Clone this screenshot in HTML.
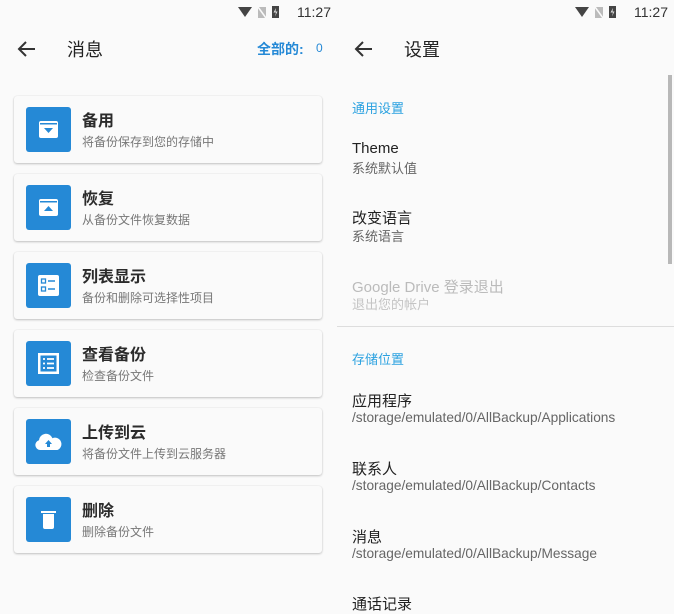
<!DOCTYPE html>
<html><head><meta charset="utf-8"><style>
*{margin:0;padding:0;box-sizing:border-box}
body{width:674px;height:600px;overflow:hidden;background:#fafafa;font-family:"Liberation Sans","Noto Sans CJK SC",sans-serif;position:relative}
.a{position:absolute;white-space:nowrap}
.card{position:absolute;left:14px;width:308px;height:67px;background:#fafafa;border-radius:3px;box-shadow:0 1px 2px rgba(0,0,0,.22),0 0 1px rgba(0,0,0,.12)}
.ic{position:absolute;left:12px;top:11px;width:45px;height:45px;background:#2589d6;border-radius:3px}
.ic svg{position:absolute;left:0;top:0}
.t{position:absolute;left:68px;top:11px;font-size:16px;font-weight:bold;color:#2b2b2b}
.s{position:absolute;left:68px;top:37px;font-size:12px;color:#777}
.h{font-size:18px;color:#222}
.pt{font-size:15px;color:#222}
.ps{font-size:13px;color:#666}
.pp{font-size:13.7px;color:#666}
.sec{font-size:13px;color:#2aa1e0}
</style></head><body>
<svg class="a" style="left:238px;top:4px" width="60" height="16"><path d="M0 3 L14 3 L7 13Z" fill="#444"/><path d="M20 3h8v11h-8z" fill="#bbb"/><path d="M20 3 L28 14" stroke="#fafafa" stroke-width="1.5"/><rect x="34" y="2" width="7" height="12" fill="#444"/><path d="M38 4 L35.5 8.5 H38 L37 12.5 L39.5 7.5 H37.5Z" fill="#ddd"/></svg>
<div class="a" style="left:297px;top:4px;font-size:14px;color:#333">11:27</div>
<svg class="a" style="left:575px;top:4px" width="60" height="16"><path d="M0 3 L14 3 L7 13Z" fill="#444"/><path d="M20 3h8v11h-8z" fill="#bbb"/><path d="M20 3 L28 14" stroke="#fafafa" stroke-width="1.5"/><rect x="34" y="2" width="7" height="12" fill="#444"/><path d="M38 4 L35.5 8.5 H38 L37 12.5 L39.5 7.5 H37.5Z" fill="#ddd"/></svg>
<div class="a" style="left:634px;top:4px;font-size:14px;color:#333">11:27</div>
<svg class="a" style="left:17px;top:40px" width="20" height="18"><path d="M18 9H3M9 2L2 9l7 7" stroke="#333" stroke-width="2" fill="none"/></svg>
<div class="a h" style="left:67px;top:36px">消息</div>
<div class="a" style="left:257px;top:39px;font-size:14px;font-weight:bold;color:#2589d6">全部的:</div>
<div class="a" style="left:316px;top:41px;font-size:12px;color:#2589d6">0</div>
<div class="card" style="top:96px"><div class="ic"><svg width="45" height="45"><rect x="13" y="14" width="19" height="17" rx="2" fill="#fff"/><rect x="14" y="16" width="17" height="1.5" fill="#2589d6"/><path d="M18 21h9l-4.5 5z" fill="#2589d6"/></svg></div><div class="t">备用</div><div class="s">将备份保存到您的存储中</div></div>
<div class="card" style="top:174px"><div class="ic"><svg width="45" height="45"><rect x="13" y="14" width="19" height="17" rx="2" fill="#fff"/><rect x="14" y="16" width="17" height="1.5" fill="#2589d6"/><path d="M18 26h9l-4.5-5z" fill="#2589d6"/></svg></div><div class="t">恢复</div><div class="s">从备份文件恢复数据</div></div>
<div class="card" style="top:252px"><div class="ic"><svg width="45" height="45"><rect x="12" y="12" width="21" height="21" rx="2" fill="#fff"/><rect x="15.5" y="16" width="4" height="4" fill="none" stroke="#2589d6" stroke-width="1.3"/><rect x="15.5" y="24" width="4" height="4" fill="none" stroke="#2589d6" stroke-width="1.3"/><path d="M22 18h7M22 26h7" stroke="#2589d6" stroke-width="1.5"/></svg></div><div class="t">列表显示</div><div class="s">备份和删除可选择性项目</div></div>
<div class="card" style="top:330px"><div class="ic"><svg width="45" height="45"><rect x="12" y="12" width="21" height="21" fill="#fff"/><rect x="14.5" y="14.5" width="16" height="16" fill="#2589d6"/><path d="M17 18h2M17 22.5h2M17 27h2M21 18h7M21 22.5h7M21 27h7" stroke="#fff" stroke-width="1.8"/></svg></div><div class="t">查看备份</div><div class="s">检查备份文件</div></div>
<div class="card" style="top:408px"><div class="ic"><svg width="45" height="45"><path d="M14 31a5 5 0 0 1 -1-9.8a7 7 0 0 1 13.5-2a5.5 5.5 0 0 1 5 11.8z" fill="#fff"/><path d="M19 25h7l-3.5-4z M21 25h3v3h-3z" fill="#2589d6"/></svg></div><div class="t">上传到云</div><div class="s">将备份文件上传到云服务器</div></div>
<div class="card" style="top:486px"><div class="ic"><svg width="45" height="45"><path d="M15 14h15v2h-15z M17 17h11v13a2 2 0 0 1-2 2h-7a2 2 0 0 1-2-2z" fill="#fff"/></svg></div><div class="t">删除</div><div class="s">删除备份文件</div></div>
<svg class="a" style="left:354px;top:40px" width="20" height="18"><path d="M18 9H3M9 2L2 9l7 7" stroke="#333" stroke-width="2" fill="none"/></svg>
<div class="a h" style="left:404px;top:36px">设置</div>
<div class="a" style="left:668px;top:75px;width:4px;height:189px;background:#b8b8b8"></div>
<div class="a sec" style="left:352px;top:98px">通用设置</div>
<div class="a pt" style="left:352px;top:140px">Theme</div>
<div class="a ps" style="left:352px;top:158px">系统默认值</div>
<div class="a pt" style="left:352px;top:207px">改变语言</div>
<div class="a ps" style="left:352px;top:226px">系统语言</div>
<div class="a pt" style="left:352px;top:276px;color:#bbb">Google Drive 登录退出</div>
<div class="a ps" style="left:352px;top:294px;color:#c4c4c4">退出您的帐户</div>
<div class="a" style="left:337px;top:326px;width:337px;height:1px;background:#ddd"></div>
<div class="a sec" style="left:352px;top:349px">存储位置</div>
<div class="a pt" style="left:352px;top:390px">应用程序</div>
<div class="a pp" style="left:352px;top:410px">/storage/emulated/0/AllBackup/Applications</div>
<div class="a pt" style="left:352px;top:458px">联系人</div>
<div class="a pp" style="left:352px;top:478px">/storage/emulated/0/AllBackup/Contacts</div>
<div class="a pt" style="left:352px;top:526px">消息</div>
<div class="a pp" style="left:352px;top:546px">/storage/emulated/0/AllBackup/Message</div>
<div class="a pt" style="left:352px;top:593px">通话记录</div>
</body></html>
